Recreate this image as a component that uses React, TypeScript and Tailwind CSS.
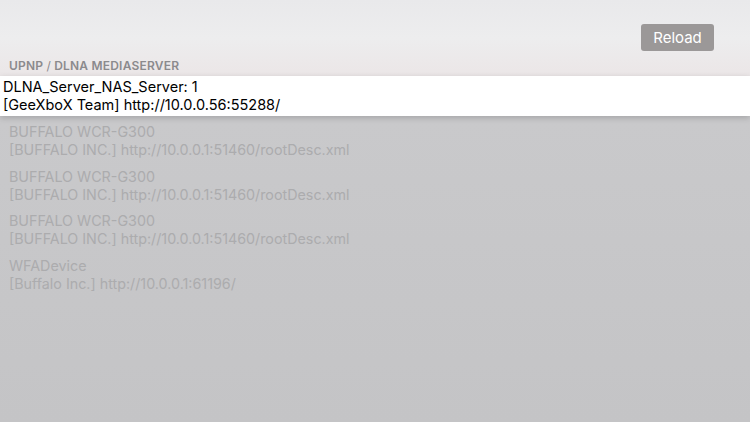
import React from 'react';

const devices = [
  { name: 'BUFFALO WCR-G300', detail: '[BUFFALO INC.] http://10.0.0.1:51460/rootDesc.xml' },
  { name: 'BUFFALO WCR-G300', detail: '[BUFFALO INC.] http://10.0.0.1:51460/rootDesc.xml' },
  { name: 'BUFFALO WCR-G300', detail: '[BUFFALO INC.] http://10.0.0.1:51460/rootDesc.xml' },
  { name: 'WFADevice', detail: '[Buffalo Inc.] http://10.0.0.1:61196/' },
];

const App: React.FC = () => {
  return (
    <div
      className="w-[750px] h-[422px] overflow-hidden flex flex-col bg-gradient-to-b from-[#cbcbcd] to-[#c4c4c6]"
      style={{ fontFamily: 'Inter, "Liberation Sans", sans-serif' }}
    >
      <div className="h-[76px] bg-gradient-to-b from-[#e9e9eb] via-[#ededee] to-[#ebe6e7] flex flex-col px-[9px]">
        <div className="flex justify-end pt-[24px] pr-[27px]">
          <button className="w-[73px] h-[27px] rounded-[3px] bg-[#9b9898] text-white text-[15px] leading-none">
            Reload
          </button>
        </div>
        <div className="mt-[6px] text-[12px] font-semibold tracking-[0.2px] text-[#8b8a8d] uppercase">
          UPNP <span className="font-normal">/</span> DLNA MediaServer
        </div>
      </div>

      <div className="h-[40px] bg-white flex flex-col justify-center px-[3px] text-black text-[14.5px] leading-[18px] shadow-[0_2px_6px_rgba(0,0,0,0.18)] relative">
        <div>DLNA_Server_NAS_Server: 1</div>
        <div>[GeeXboX Team] http://10.0.0.56:55288/</div>
      </div>

      <div className="flex flex-col gap-[8.6px] pt-[7px] px-[9px] text-[14.3px] leading-[18px] text-[#acacae]">
        {devices.map((d, i) => (
          <div key={i}>
            <div>{d.name}</div>
            <div>{d.detail}</div>
          </div>
        ))}
      </div>
    </div>
  );
};

export default App;
